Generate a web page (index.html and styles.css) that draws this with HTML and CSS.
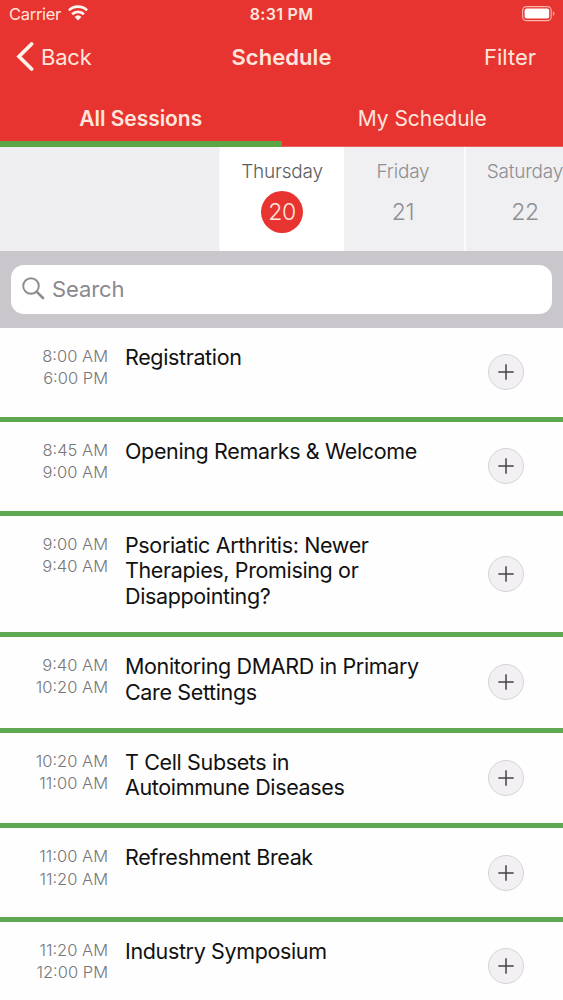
FILE: index.html
```html
<!DOCTYPE html>
<html lang="en">
<head>
<meta charset="utf-8">
<title>Schedule</title>
<link rel="stylesheet" href="styles.css">
</head>
<body>
<svg class="defs" width="0" height="0" aria-hidden="true">
  <symbol id="plus" viewBox="0 0 16 16"><path d="M8 .3v15.4M.3 8h15.4" fill="none" stroke="#444246" stroke-width="1.5"/></symbol>
</svg>
<header class="header">
  <div class="status">
    <div class="carrier"><span>Carrier</span>
      <svg class="wifi" width="20" height="16" viewBox="0 0 20 16"><g fill="none" stroke="#fff5f0" stroke-width="2.7"><path d="M.9 5.4a13 13 0 0 1 18.2 0"/><path d="M4.1 9.2a8.4 8.4 0 0 1 11.8 0"/></g><path d="M6.6 11.9a5 5 0 0 1 6.8 0L10 15.5z" fill="#fff5f0"/></svg>
    </div>
    <span class="clock">8:31 PM</span>
    <svg class="battery" width="34" height="16" viewBox="0 0 34 16"><rect x=".6" y=".6" width="28.6" height="14" rx="3.8" fill="none" stroke="#f9b5ae" stroke-width="1.1"/><rect x="2.6" y="2.6" width="24.6" height="10" rx="2" fill="#fff"/><path d="M30.9 5.2q1.6.8 1.6 2.4t-1.6 2.4z" fill="#f5a49d"/></svg>
  </div>
  <nav class="navbar">
    <a class="back"><svg width="18" height="29" viewBox="0 0 18 29"><path d="M15.6 2 3 14.5 15.6 27" fill="none" stroke="#fff2ec" stroke-width="3.7" stroke-linecap="round"/></svg><span>Back</span></a>
    <h1 class="title">Schedule</h1>
    <a class="filter">Filter</a>
  </nav>
  <div class="tabs">
    <a class="tab tab-active"><span>All Sessions</span></a>
    <a class="tab"><span>My Schedule</span></a>
  </div>
</header>
<div class="days">
  <div class="day-blank"></div>
  <div class="day day-active"><span class="day-name">Thursday</span><span class="day-num">20</span></div>
  <div class="day"><span class="day-name">Friday</span><span class="day-num">21</span></div>
  <div class="day"><span class="day-name">Saturday</span><span class="day-num">22</span></div>
</div>
<div class="searchbar">
  <div class="search"><svg width="23" height="23" viewBox="0 0 23 23"><circle cx="9" cy="9" r="7.8" fill="none" stroke="#8d8c91" stroke-width="1.9"/><path d="m14.8 14.8 6.2 6.2" stroke="#8d8c91" stroke-width="2.6" stroke-linecap="round"/></svg><span>Search</span></div>
</div>
<main class="list">
  <article class="row one"><div class="time">8:00 AM<br>6:00 PM</div><h2 class="name">Registration</h2><button class="add" aria-label="Add"><svg width="16" height="16"><use href="#plus"/></svg></button></article>
  <article class="row one"><div class="time">8:45 AM<br>9:00 AM</div><h2 class="name">Opening Remarks &amp; Welcome</h2><button class="add" aria-label="Add"><svg width="16" height="16"><use href="#plus"/></svg></button></article>
  <article class="row three"><div class="time">9:00 AM<br>9:40 AM</div><h2 class="name">Psoriatic Arthritis: Newer<br>Therapies, Promising or<br>Disappointing?</h2><button class="add" aria-label="Add"><svg width="16" height="16"><use href="#plus"/></svg></button></article>
  <article class="row two"><div class="time">9:40 AM<br>10:20 AM</div><h2 class="name">Monitoring DMARD in Primary<br>Care Settings</h2><button class="add" aria-label="Add"><svg width="16" height="16"><use href="#plus"/></svg></button></article>
  <article class="row two"><div class="time">10:20 AM<br>11:00 AM</div><h2 class="name">T Cell Subsets in<br>Autoimmune Diseases</h2><button class="add" aria-label="Add"><svg width="16" height="16"><use href="#plus"/></svg></button></article>
  <article class="row one"><div class="time">11:00 AM<br>11:20 AM</div><h2 class="name">Refreshment Break</h2><button class="add" aria-label="Add"><svg width="16" height="16"><use href="#plus"/></svg></button></article>
  <article class="row one"><div class="time">11:20 AM<br>12:00 PM</div><h2 class="name">Industry Symposium</h2><button class="add" aria-label="Add"><svg width="16" height="16"><use href="#plus"/></svg></button></article>
</main>
</body>
</html>
```
FILE: styles.css
```css
* { box-sizing: border-box; }
body { margin: 0; width: 563px; height: 1000px; overflow: hidden; background: #fefefe; font-family: Inter, "Liberation Sans", sans-serif; }
.defs { display: block; }
svg { flex: none; }
h1, h2 { margin: 0; font-weight: 400; }

.header { height: 147px; background: #e73430; color: #ffe6dd; border-bottom: 1px solid #e8605b; }
.status { height: 28px; display: grid; grid-template-columns: 1fr auto 1fr; align-items: center; padding: 0 7px; font-size: 16.5px; }
.carrier { display: flex; align-items: center; gap: 7px; padding-left: 2px; letter-spacing: -.3px; }
.carrier svg { margin-top: -2px; }
.clock { font-weight: 600; font-size: 16px; letter-spacing: .3px; }
.battery { justify-self: end; }
.navbar { height: 57px; display: grid; grid-template-columns: 1fr auto 1fr; align-items: center; padding: 0 27px; font-size: 22px; }
.back { display: flex; align-items: center; gap: 7px; margin-left: -11px; letter-spacing: -.2px; }
.title { font-size: 22px; font-weight: 600; letter-spacing: .05px; }
.filter { justify-self: end; letter-spacing: 0; }
.tabs { height: 62px; display: grid; grid-template-columns: 1fr 1fr; font-size: 21px; letter-spacing: -.05px; }
.tab { display: flex; justify-content: center; padding-top: 21px; line-height: 26px; border-bottom: 6px solid transparent; }
.tab-active { font-weight: 600; border-bottom-color: #5ba544; }

.days { height: 104px; display: flex; background: #f0eff2; overflow: hidden; }
.day-blank { flex: none; width: 220px; background: #efeef0; border-right: 1px solid #f6f5f7; }
.day { flex: none; width: 122px; padding: 13px 2px 0 0; display: flex; flex-direction: column; align-items: center; gap: 7px; color: #8f8e93; border-right: 2px solid #fbfbfc; }
.day-active { background: #fff; padding-right: 0; width: 124px; padding-right: 0; border-right: 0; color: #5e5d62; }
.day-name { font-size: 19px; line-height: 24px; font-weight: 300; letter-spacing: -.2px; }
.day-num { width: 42px; height: 42px; line-height: 43px; border-radius: 50%; text-align: center; font-size: 23px; font-weight: 300; letter-spacing: -.3px; }
.day-active .day-num { background: #e73430; color: #ffe6dd; }

.searchbar { height: 77px; padding: 14px 11px; background: #c9c7cb; }
.search { height: 49px; border-radius: 13px; background: #fff; display: flex; align-items: center; gap: 7px; padding: 0 0 2px 11px; color: #8a898e; font-size: 22px; letter-spacing: -.1px; }

.row { display: grid; grid-template-columns: 108px 1fr 36px; column-gap: 17px; padding: 16px 39px 0 0; border-bottom: 5px solid #5fa750; }
.one { height: 93.8px; }
.two { height: 95.6px; }
.three { height: 121.5px; }
.time { padding-top: 1px; text-align: right; font-size: 16.5px; line-height: 22.3px; font-weight: 300; color: #77767a; }
.name { padding-top: 1px; font-size: 21.5px; line-height: 25.8px; letter-spacing: -.36px; color: #111; white-space: nowrap; }
.add { width: 36px; height: 36px; margin: 0 0 16px; padding: 0; align-self: center; display: flex; align-items: center; justify-content: center; border: 1px solid #d5d3d6; border-radius: 50%; background: #f2f0f2; }
```
